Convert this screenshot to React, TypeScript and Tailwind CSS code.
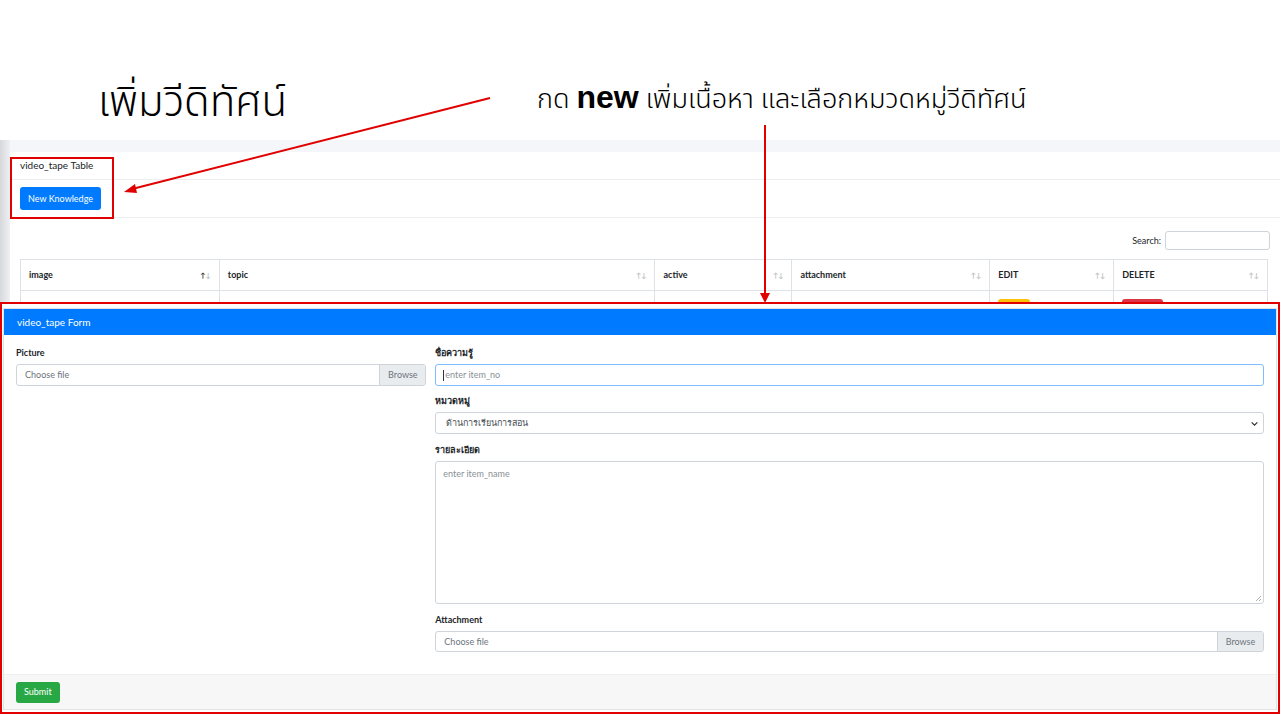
import React from "react";

const sans = "font-['Lato','Noto_Sans','DejaVu_Sans',sans-serif]";
const thai = "font-['Noto_Sans_Thai','Noto_Sans','DejaVu_Sans',sans-serif]";

const columns = [
  { name: "image", w: "w-[199px]", sorted: true },
  { name: "topic", w: "w-[436px]" },
  { name: "active", w: "w-[137px]" },
  { name: "attachment", w: "w-[198px]" },
  { name: "EDIT", w: "w-[124px]" },
  { name: "DELETE", w: "w-[154px]" },
];

const SortIcon = ({ sorted }: { sorted?: boolean }) => (
  <span className="flex text-[7px] leading-none">
    <span className={sorted ? "text-[#333]" : "text-[#c0c0c0]"}>↑</span>
    <span className="text-[#c0c0c0]">↓</span>
  </span>
);

const FileInput = ({ h = "h-[22px]" }: { h?: string }) => (
  <div className={`flex ${h} border border-[#ced4da] rounded-[3px] overflow-hidden`}>
    <div className="flex-1 flex items-center px-[8px] text-[9px] text-[#6c757d]">Choose file</div>
    <div className="w-[46px] flex items-center justify-center bg-[#e9ecef] border-l border-[#ced4da] text-[9px] text-[#6c757d]">
      Browse
    </div>
  </div>
);

const Label = ({ children }: { children: React.ReactNode }) => (
  <div className="text-[9px] font-bold text-[#212529] leading-[14px] mb-[4px]">{children}</div>
);

export default function App() {
  return (
    <div className={`relative w-[1280px] h-[720px] overflow-hidden bg-white ${sans}`}>
      {/* slide title area */}
      <div className="h-[140px] flex items-start pl-[98px]">
        <div className={`w-[439px] pt-[75px] text-[42px] leading-[56px] text-black font-[350] ${thai}`}>
          เพิ่มวีดิทัศน์
        </div>
        <div className={`pt-[78px] text-[27px] leading-[38px] text-black font-[350] ${thai}`}>
          กด <span className="font-bold text-[32px] font-['Liberation_Sans',sans-serif]">new</span> เพิ่มเนื้อหา และเลือกหมวดหมู่วีดิทัศน์
        </div>
      </div>

      {/* screenshot: table card */}
      <div className="h-[162px] flex bg-[#f4f6f9] overflow-hidden">
        <div className="w-[10px] bg-gradient-to-r from-[#d6d8db] to-[#eef0f3]" />
        <div className="flex-1 pt-[12px]">
          <div className="bg-white h-full">
            <div className="h-[28px] flex items-center px-[10px] text-[10px] text-[#212529] border-b border-[#eceef0]">
              video_tape Table
            </div>
            <div className="h-[38px] flex items-center px-[10px] border-b border-[#eceef0]">
              <button className="h-[23px] px-[8px] rounded-[3px] bg-[#007bff] text-white text-[9px]">
                New Knowledge
              </button>
            </div>
            <div className="px-[10px] pt-[13px]">
              <div className="flex justify-end items-center gap-[4px] h-[19px]">
                <span className="text-[9px] text-[#212529]">Search:</span>
                <div className="w-[105px] h-[19px] border border-[#ced4da] rounded-[3px]" />
              </div>
              <div className="mt-[9px] w-[1248px] border-t border-l border-[#dee2e6]">
                <div className="flex h-[31px]">
                  {columns.map((c) => (
                    <div
                      key={c.name}
                      className={`${c.w} flex items-center justify-between px-[8px] border-r border-b border-[#dee2e6] text-[9px] font-bold text-[#212529]`}
                    >
                      <span>{c.name}</span>
                      <SortIcon sorted={c.sorted} />
                    </div>
                  ))}
                </div>
                <div className="flex h-[20px]">
                  {columns.map((c) => (
                    <div key={c.name} className={`${c.w} border-r border-[#dee2e6] px-[8px] pt-[8px]`}>
                      {c.name === "EDIT" && <div className="w-[32px] h-[12px] rounded-t-[3px] bg-[#ffc107]" />}
                      {c.name === "DELETE" && <div className="w-[41px] h-[12px] rounded-t-[3px] bg-[#dc3545]" />}
                    </div>
                  ))}
                </div>
              </div>
            </div>
          </div>
        </div>
      </div>

      {/* screenshot: form card, framed in red */}
      <div className="h-[412px] border-2 border-[#e00000] px-[1px] pt-[4px] bg-white">
        <div className="border border-[#e3e3e3] h-[402px] flex flex-col">
          <div className="h-[26px] bg-[#007bff] flex items-center px-[13px] text-[10px] text-white">
            video_tape Form
          </div>
          <div className="flex-1 flex gap-[9px] px-[12px] pt-[11px]">
            <div className="w-[411px]">
              <Label>Picture</Label>
              <FileInput />
            </div>
            <div className="w-[830px]">
              <Label>ชื่อความรู้</Label>
              <div className="h-[22px] border border-[#80bdff] rounded-[3px] flex items-center px-[7px] text-[9px] text-[#8a9096]">
                <span className="w-px h-[11px] bg-[#333] mr-px" />
                enter item_no
              </div>
              <div className="mt-[8px]">
                <Label>หมวดหมู่</Label>
                <div className="h-[22px] border border-[#ced4da] rounded-[3px] flex items-center justify-between pl-[10px] pr-[4px] text-[9px] text-[#495057]">
                  <span>ด้านการเรียนการสอน</span>
                  <svg width="9" height="9" viewBox="0 0 16 16">
                    <path d="M3 6l5 5 5-5" fill="none" stroke="#333" strokeWidth="2.2" />
                  </svg>
                </div>
              </div>
              <div className="mt-[9px]">
                <Label>รายละเอียด</Label>
                <div className="relative h-[143px] border border-[#ced4da] rounded-[3px] px-[7px] pt-[5px] text-[9px] text-[#8a9096]">
                  enter item_name
                  <svg className="absolute right-[1px] bottom-[1px]" width="7" height="7" viewBox="0 0 7 7">
                    <path d="M6 1L1 6M6 4L4 6" stroke="#999" strokeWidth="0.8" />
                  </svg>
                </div>
              </div>
              <div className="mt-[9px]">
                <Label>Attachment</Label>
                <FileInput h="h-[21px]" />
              </div>
            </div>
          </div>
          <div className="h-[35px] bg-[#f7f7f7] border-t border-[#efefef] flex items-center px-[12px]">
            <button className="h-[21px] px-[8px] rounded-[3px] bg-[#28a745] text-white text-[9px]">Submit</button>
          </div>
        </div>
      </div>

      {/* annotations */}
      <div className="absolute left-[10px] top-[157px] w-[104px] h-[62px] border-2 border-[#e00000]" />
      <svg className="absolute left-0 top-0 pointer-events-none" width="1280" height="720">
        <line x1="490" y1="98" x2="132" y2="189" stroke="#e00000" strokeWidth="2" />
        <polygon points="124,192 135,184 137,193" fill="#e00000" />
        <line x1="765" y1="125" x2="765" y2="294" stroke="#e00000" strokeWidth="2" />
        <polygon points="760,293 770,293 765,303" fill="#e00000" />
      </svg>
    </div>
  );
}
